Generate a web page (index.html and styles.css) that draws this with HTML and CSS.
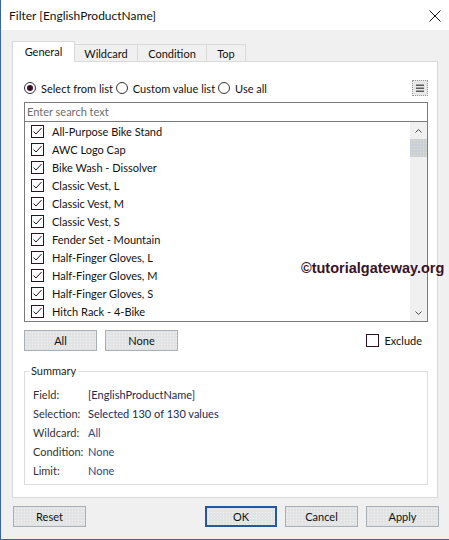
FILE: index.html
```html
<!DOCTYPE html>
<html>
<head>
<meta charset="utf-8">
<title>Filter</title>
<link rel="stylesheet" href="styles.css">
</head>
<body>
<div class="window">
  <div class="titlebar">
    <span class="title">Filter [EnglishProductName]</span>
    <svg class="close" width="12" height="12" viewBox="0 0 12 12"><path d="M0.5 0.5 L11.5 11.5 M11.5 0.5 L0.5 11.5" stroke="#111" stroke-width="1" fill="none"/></svg>
  </div>
  <div class="main">
    <div class="tabs">
      <div class="tab active w-general">General</div>
      <div class="tab w-wildcard">Wildcard</div>
      <div class="tab w-condition">Condition</div>
      <div class="tab w-top">Top</div>
    </div>
    <div class="panel">
      <div class="radios">
        <label class="radio-item"><span class="radio on"></span>Select from list</label>
        <label class="radio-item"><span class="radio"></span>Custom value list</label>
        <label class="radio-item"><span class="radio"></span>Use all</label>
        <span class="menu-btn">
          <svg width="14" height="14" viewBox="0 0 14 14"><rect x="3" y="3.5" width="8" height="1.5" fill="#5a5a5a"/><rect x="3" y="6.5" width="8" height="1.5" fill="#5a5a5a"/><rect x="3" y="9.5" width="8" height="1.5" fill="#5a5a5a"/></svg>
        </span>
      </div>
      <div class="search">Enter search text</div>
      <div class="list">
        <div class="items">
          <div class="row"><svg class="cb" width="13" height="13" viewBox="0 0 13 13"><rect x="0.5" y="0.5" width="12" height="12" fill="#fff" stroke="#2e1020"/><path d="M2.5 6.5 L5 9 L10.5 3" fill="none" stroke="#2e1020"/></svg><span>All-Purpose Bike Stand</span></div>
          <div class="row"><svg class="cb" width="13" height="13" viewBox="0 0 13 13"><rect x="0.5" y="0.5" width="12" height="12" fill="#fff" stroke="#2e1020"/><path d="M2.5 6.5 L5 9 L10.5 3" fill="none" stroke="#2e1020"/></svg><span>AWC Logo Cap</span></div>
          <div class="row"><svg class="cb" width="13" height="13" viewBox="0 0 13 13"><rect x="0.5" y="0.5" width="12" height="12" fill="#fff" stroke="#2e1020"/><path d="M2.5 6.5 L5 9 L10.5 3" fill="none" stroke="#2e1020"/></svg><span>Bike Wash - Dissolver</span></div>
          <div class="row"><svg class="cb" width="13" height="13" viewBox="0 0 13 13"><rect x="0.5" y="0.5" width="12" height="12" fill="#fff" stroke="#2e1020"/><path d="M2.5 6.5 L5 9 L10.5 3" fill="none" stroke="#2e1020"/></svg><span>Classic Vest, L</span></div>
          <div class="row"><svg class="cb" width="13" height="13" viewBox="0 0 13 13"><rect x="0.5" y="0.5" width="12" height="12" fill="#fff" stroke="#2e1020"/><path d="M2.5 6.5 L5 9 L10.5 3" fill="none" stroke="#2e1020"/></svg><span>Classic Vest, M</span></div>
          <div class="row"><svg class="cb" width="13" height="13" viewBox="0 0 13 13"><rect x="0.5" y="0.5" width="12" height="12" fill="#fff" stroke="#2e1020"/><path d="M2.5 6.5 L5 9 L10.5 3" fill="none" stroke="#2e1020"/></svg><span>Classic Vest, S</span></div>
          <div class="row"><svg class="cb" width="13" height="13" viewBox="0 0 13 13"><rect x="0.5" y="0.5" width="12" height="12" fill="#fff" stroke="#2e1020"/><path d="M2.5 6.5 L5 9 L10.5 3" fill="none" stroke="#2e1020"/></svg><span>Fender Set - Mountain</span></div>
          <div class="row"><svg class="cb" width="13" height="13" viewBox="0 0 13 13"><rect x="0.5" y="0.5" width="12" height="12" fill="#fff" stroke="#2e1020"/><path d="M2.5 6.5 L5 9 L10.5 3" fill="none" stroke="#2e1020"/></svg><span>Half-Finger Gloves, L</span></div>
          <div class="row"><svg class="cb" width="13" height="13" viewBox="0 0 13 13"><rect x="0.5" y="0.5" width="12" height="12" fill="#fff" stroke="#2e1020"/><path d="M2.5 6.5 L5 9 L10.5 3" fill="none" stroke="#2e1020"/></svg><span>Half-Finger Gloves, M</span></div>
          <div class="row"><svg class="cb" width="13" height="13" viewBox="0 0 13 13"><rect x="0.5" y="0.5" width="12" height="12" fill="#fff" stroke="#2e1020"/><path d="M2.5 6.5 L5 9 L10.5 3" fill="none" stroke="#2e1020"/></svg><span>Half-Finger Gloves, S</span></div>
          <div class="row"><svg class="cb" width="13" height="13" viewBox="0 0 13 13"><rect x="0.5" y="0.5" width="12" height="12" fill="#fff" stroke="#2e1020"/><path d="M2.5 6.5 L5 9 L10.5 3" fill="none" stroke="#2e1020"/></svg><span>Hitch Rack - 4-Bike</span></div>
        </div>
        <div class="scrollbar">
          <div class="arrow"><svg width="7" height="4" viewBox="0 0 7 4"><path d="M0.5 3.5 L3.5 0.5 L6.5 3.5" stroke="#4a4a4a" fill="none"/></svg></div>
          <div class="thumb"></div>
          <div class="track"></div>
          <div class="arrow"><svg width="7" height="4" viewBox="0 0 7 4"><path d="M0.5 0.5 L3.5 3.5 L6.5 0.5" stroke="#4a4a4a" fill="none"/></svg></div>
        </div>
      </div>
      <div class="actions">
        <span class="btn">All</span>
        <span class="btn">None</span>
        <label class="exclude"><span class="box"></span>Exclude</label>
      </div>
      <fieldset class="summary">
        <legend>Summary</legend>
        <div class="srow"><span class="lbl">Field:</span><span class="val dark">[EnglishProductName]</span></div>
        <div class="srow"><span class="lbl">Selection:</span><span class="val dark">Selected 130 of 130 values</span></div>
        <div class="srow"><span class="lbl">Wildcard:</span><span class="val">All</span></div>
        <div class="srow"><span class="lbl">Condition:</span><span class="val">None</span></div>
        <div class="srow"><span class="lbl">Limit:</span><span class="val">None</span></div>
      </fieldset>
    </div>
    <div class="footer">
      <span class="btn reset">Reset</span>
      <span class="btn ok">OK</span>
      <span class="btn">Cancel</span>
      <span class="btn">Apply</span>
    </div>
  </div>
  <div class="watermark">©tutorialgateway.org</div>
</div>
</body>
</html>
```
FILE: styles.css
```css
* { box-sizing: border-box; }
html, body { margin: 0; padding: 0; }
body {
  width: 449px;
  height: 540px;
  overflow: hidden;
  background: #f0f0f0;
  font-family: Lato, "Liberation Sans", sans-serif;
  font-size: 11px;
  color: #111;
}
.window {
  position: relative;
  width: 449px;
  height: 540px;
  border-left: 1px solid #3a62b0;
  border-bottom: 1px solid #3a62b0;
  background: #f0f0f0;
}
.titlebar {
  height: 30px;
  background: #fff;
  display: flex;
  align-items: center;
  justify-content: space-between;
  padding: 0 8px 0 8px;
}
.title { font-size: 12px; color: #111; }
.close { display: block; margin-top: 1px; }
.main { padding: 11px 11px 0 11px; }

.tabs {
  position: relative;
  z-index: 2;
  height: 21px;
  margin-bottom: -1px;
  display: flex;
  align-items: flex-end;
}
.tab {
  height: 17px;
  margin-bottom: 1px;
  margin-left: -1px;
  border: 1px solid #d9d9d9;
  border-bottom: none;
  background: #f0f0f0;
  display: flex;
  align-items: center;
  justify-content: center;
  padding-top: 1px;
}
.tab:first-child { margin-left: 0; }
.tab.active {
  height: 21px;
  margin-bottom: 0;
  background: #fff;
  position: relative;
  z-index: 1;
  padding-top: 0;
  padding-bottom: 2px;
}
.w-general { width: 63px; }
.w-wildcard { width: 64px; }
.w-condition { width: 70px; }
.w-top { width: 40px; }

.panel {
  height: 437px;
  background: #fff;
  border: 1px solid #d9d9d9;
  padding: 16px 9px 0 11px;
}
.radios {
  height: 20px;
  display: flex;
  align-items: center;
}
.radio-item {
  display: flex;
  align-items: center;
  gap: 5px;
  margin-right: 3px;
}
.radio {
  width: 12px;
  height: 12px;
  border: 1px solid #333;
  border-radius: 50%;
  background: #fff;
  display: flex;
  align-items: center;
  justify-content: center;
}
.radio.on::after {
  content: "";
  width: 6px;
  height: 6px;
  border-radius: 50%;
  background: #3a1126;
}
.menu-btn {
  margin-left: auto;
  width: 16px;
  height: 16px;
  border: 1px dotted #9a9a9a;
  background: #e8e8e8;
  display: flex;
  align-items: center;
  justify-content: center;
}
.menu-btn svg { display: block; }

.search {
  margin-top: 4px;
  height: 20px;
  border: 1px solid #7a7a7a;
  padding-left: 2px;
  line-height: 18px;
  color: #6d6d6d;
}
.list {
  height: 200px;
  border: 1px solid #7a7a7a;
  border-top: none;
  display: flex;
  overflow: hidden;
}
.items { flex: 1; }
.row {
  height: 18px;
  display: flex;
  align-items: center;
  gap: 8px;
  padding-left: 6px;
}
.cb { display: block; flex: none; }
.scrollbar {
  width: 17px;
  background: #f0f0f0;
  display: flex;
  flex-direction: column;
}
.arrow {
  height: 17px;
  display: flex;
  align-items: center;
  justify-content: center;
}
.arrow svg { display: block; }
.thumb {
  height: 18px;
  background-color: #c9d0d6;
  background-image: radial-gradient(#e8e2c0 0.6px, transparent 0.8px);
  background-size: 3px 3px;
}
.track { flex: 1; }

.actions {
  margin-top: 8px;
  height: 21px;
  display: flex;
  align-items: center;
  gap: 8px;
}
.btn {
  width: 73px;
  height: 21px;
  border: 1px solid #a7b0b8;
  background-color: #e1e3e5;
  background-image: radial-gradient(#f2f2f2 0.5px, transparent 0.7px);
  background-size: 3px 3px;
  display: flex;
  align-items: center;
  justify-content: center;
  color: #111;
}
.exclude {
  margin-left: auto;
  margin-right: 6px;
  display: flex;
  align-items: center;
  gap: 5px;
}
.box {
  width: 13px;
  height: 13px;
  border: 1px solid #2e1020;
  background: #fff;
}

.summary {
  margin: 12px 0 0 0;
  padding: 6px 0 4px 0;
  border: 1px solid #dcdcdc;
  min-width: 0;
}
.summary legend {
  margin-left: 4px;
  padding: 0 2px;
  line-height: 16px;
  color: #222;
}
.srow {
  height: 19px;
  display: flex;
  align-items: center;
  padding-left: 8px;
}
.lbl { width: 55px; flex: none; white-space: nowrap; color: #333; }
.val { color: #2a4b8c; }
.val.dark { color: #1a2a55; }

.footer {
  padding-top: 8px;
  margin: 0 -1px 0 1px;
  display: flex;
  gap: 8px;
}
.footer .reset { margin-right: auto; }
.footer .ok {
  width: 72px;
  border: 2px solid #2457a6;
}
.watermark {
  position: absolute;
  left: 300px;
  top: 259px;
  font-family: "Liberation Sans", Arial, sans-serif;
  font-weight: bold;
  font-size: 14.5px;
  line-height: 18px;
  color: #3a1226;
  white-space: nowrap;
}
```
